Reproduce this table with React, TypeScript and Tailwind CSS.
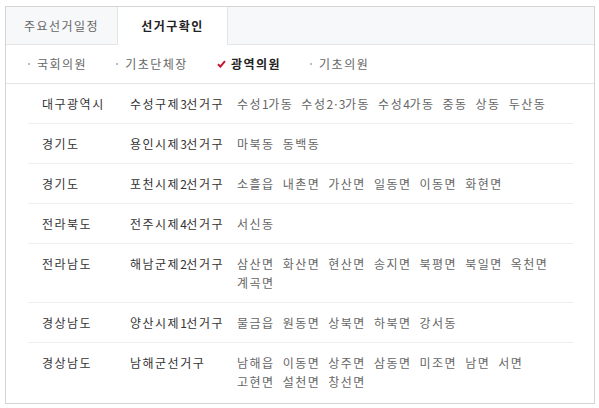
const SUB_TABS = [
  { label: "국회의원", active: false },
  { label: "기초단체장", active: false },
  { label: "광역의원", active: true },
  { label: "기초의원", active: false },
];

const ROWS: { sido: string; district: string; dongs: string[] }[] = [
  { sido: "대구광역시", district: "수성구제3선거구", dongs: ["수성1가동", "수성2·3가동", "수성4가동", "중동", "상동", "두산동"] },
  { sido: "경기도", district: "용인시제3선거구", dongs: ["마북동", "동백동"] },
  { sido: "경기도", district: "포천시제2선거구", dongs: ["소흘읍", "내촌면", "가산면", "일동면", "이동면", "화현면"] },
  { sido: "전라북도", district: "전주시제4선거구", dongs: ["서신동"] },
  { sido: "전라남도", district: "해남군제2선거구", dongs: ["삼산면", "화산면", "현산면", "송지면", "북평면", "북일면", "옥천면", "계곡면"] },
  { sido: "경상남도", district: "양산시제1선거구", dongs: ["물금읍", "원동면", "상북면", "하북면", "강서동"] },
  { sido: "경상남도", district: "남해군선거구", dongs: ["남해읍", "이동면", "상주면", "삼동면", "미조면", "남면", "서면", "고현면", "설천면", "창선면"] },
];

// 숫자·가운뎃점은 자간을 줄여서 원본 폭에 맞춤
function Label({ text }: { text: string }) {
  const parts = text.split(/([0-9·]+)/).filter(Boolean);
  return (
    <>
      {parts.map((p, i) =>
        /^[0-9·]+$/.test(p) ? (
          <span key={i} className="tracking-[-0.5px]">
            {p}
          </span>
        ) : (
          <span key={i}>{p}</span>
        ),
      )}
    </>
  );
}

function CheckMark() {
  return (
    <svg width="9" height="8" viewBox="0 0 9 8" className="mr-[5px]">
      <path d="M1 4.2 L3.4 6.6 L8 1.2" fill="none" stroke="#c4122f" strokeWidth="2" />
    </svg>
  );
}

export default function App() {
  return (
    <div
      className="ml-[5px] mt-[6px] w-[590px] border border-[#d5d5d5] bg-white text-[12px] tracking-[1.5px]"
      style={{ fontFamily: '"Noto Sans CJK KR", "Noto Sans", sans-serif' }}
    >
      {/* 상단 탭 */}
      <div className="flex h-[38px] bg-[#f7f8fa]">
        <div className="flex w-[111px] items-center justify-center border-b border-[#e5e5e5] text-[#666]">
          주요선거일정
        </div>
        <div className="flex w-[111px] items-center justify-center border-x border-[#e5e5e5] bg-white font-bold text-[#222]">
          선거구확인
        </div>
        <div className="flex-1 border-b border-[#e5e5e5]" />
      </div>

      {/* 서브 탭 */}
      <div className="flex h-[39px] items-center gap-[29px] border-b border-[#e5e5e5] pl-[22px]">
        {SUB_TABS.map((tab) =>
          tab.active ? (
            <div key={tab.label} className="flex items-center font-bold text-[#222]">
              <CheckMark />
              {tab.label}
            </div>
          ) : (
            <div key={tab.label} className="flex items-center text-[#666]">
              <span className="mr-[7px] inline-block h-[2px] w-[2px] bg-[#bbb]" />
              {tab.label}
            </div>
          ),
        )}
      </div>

      {/* 선거구 목록 */}
      <div className="pb-[2px] pl-[22px] pr-[21px]">
        {ROWS.map((row, i) => (
          <div
            key={row.district}
            className={`flex pb-[10px] pt-[10px] leading-[19px] ${i < ROWS.length - 1 ? "border-b border-[#eeeeee]" : ""}`}
          >
            <div className="w-[102px] shrink-0 pl-[14px] text-[#333]">{row.sido}</div>
            <div className="w-[107px] shrink-0 text-[#333]">
              <Label text={row.district} />
            </div>
            <div className="flex w-[325px] flex-wrap gap-x-[8px] text-[#666]">
              {row.dongs.map((d) => (
                <span key={d}>
                  <Label text={d} />
                </span>
              ))}
            </div>
          </div>
        ))}
      </div>
    </div>
  );
}
